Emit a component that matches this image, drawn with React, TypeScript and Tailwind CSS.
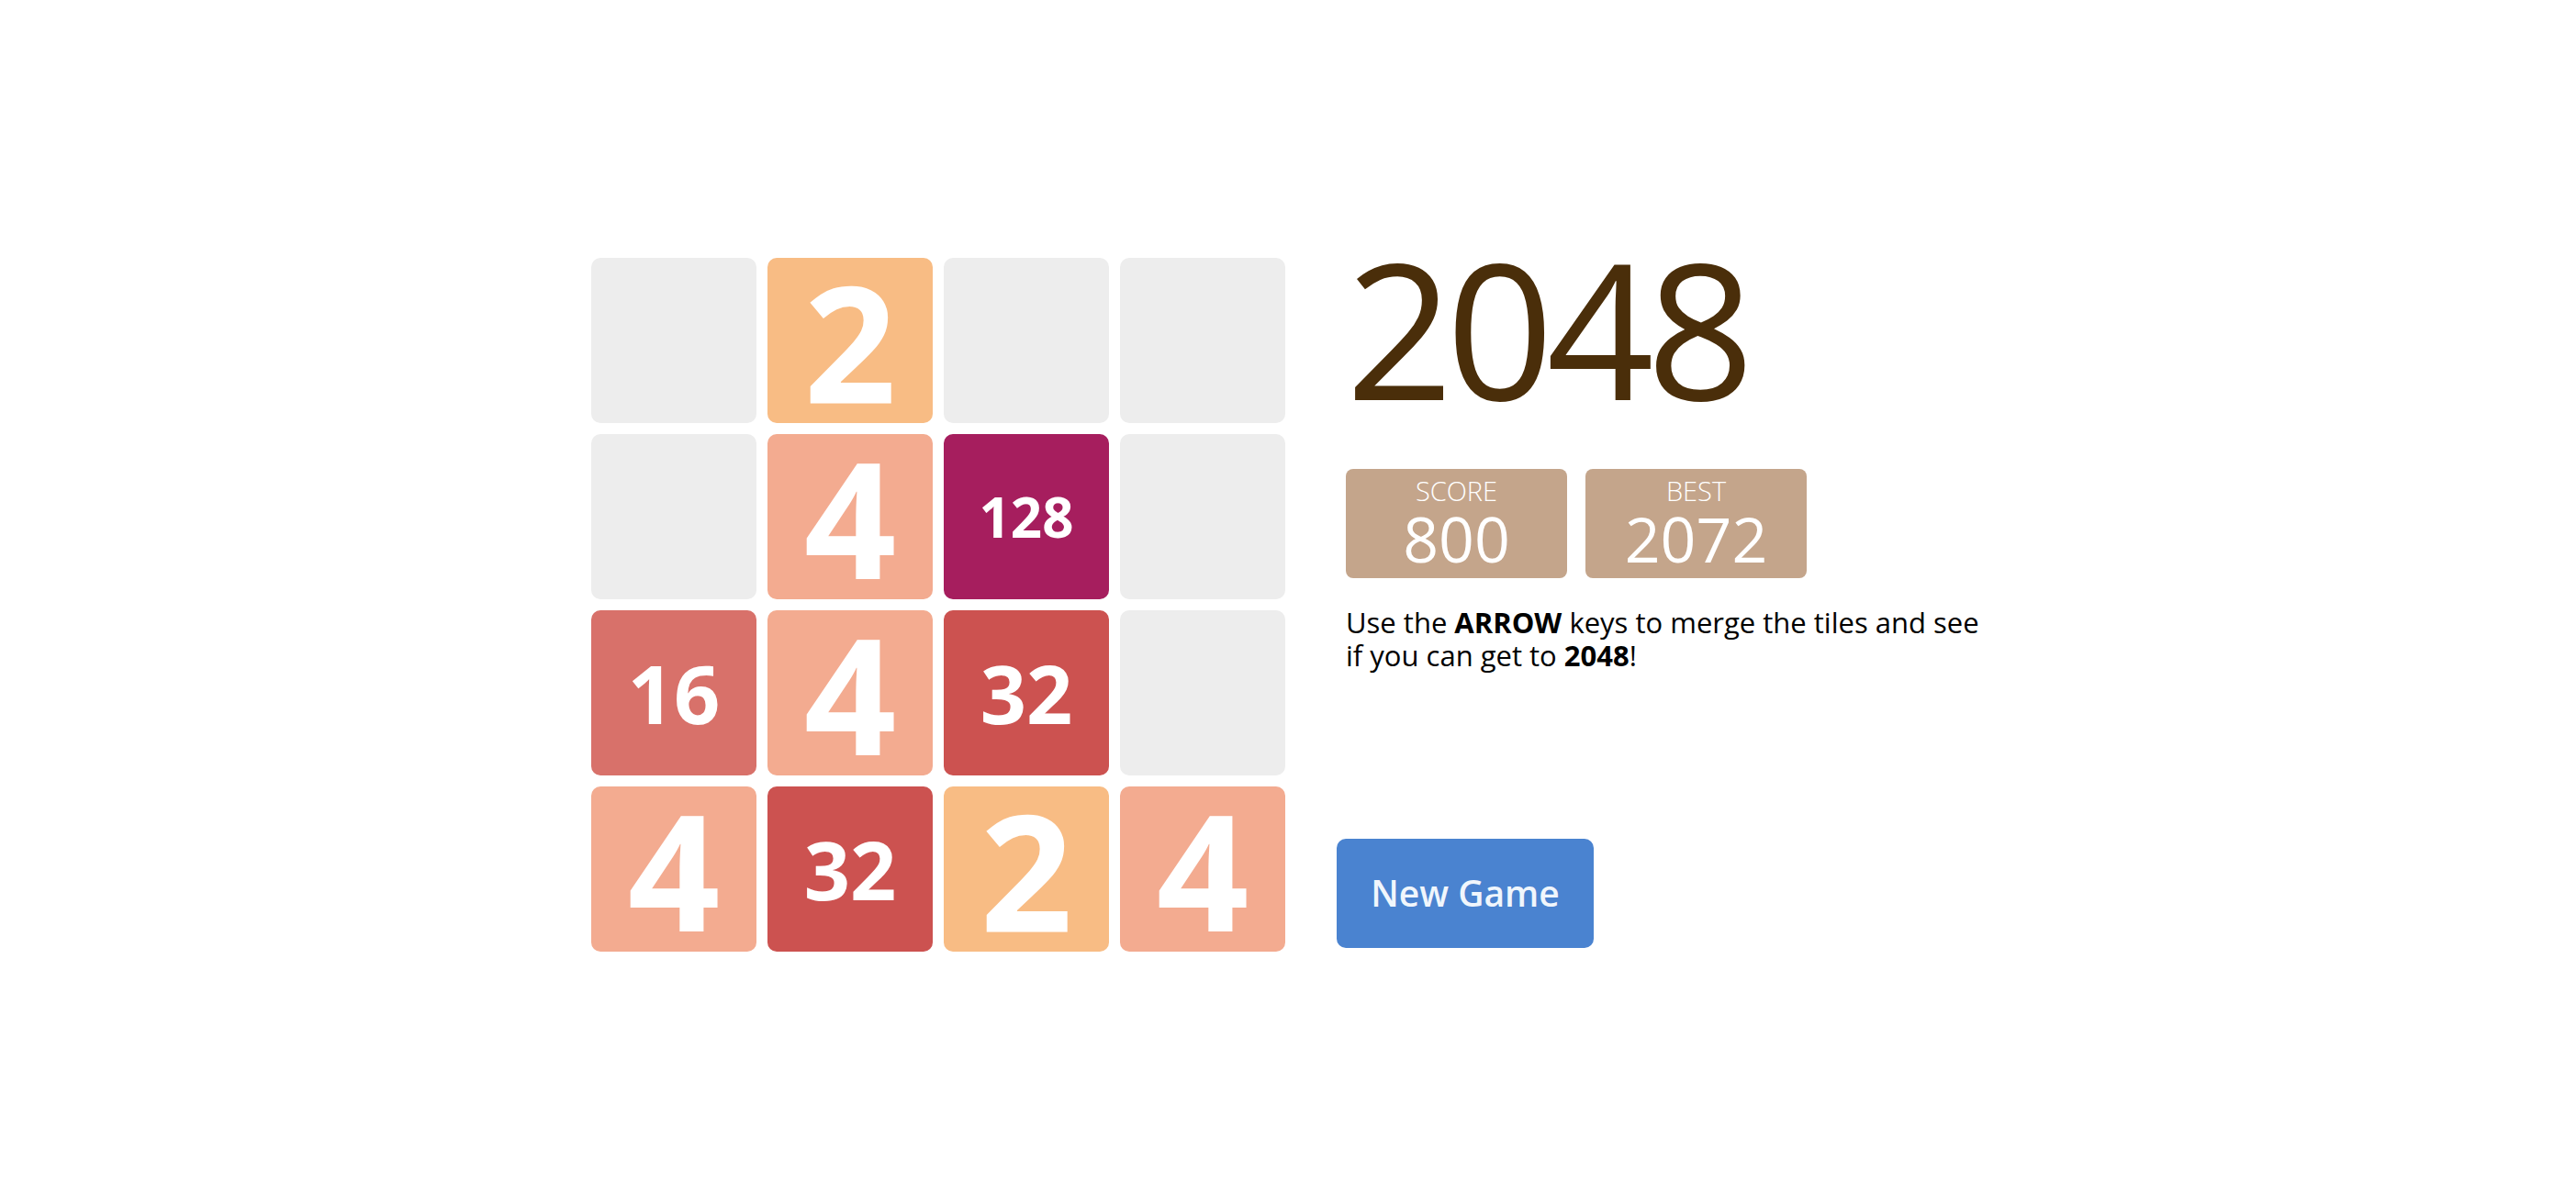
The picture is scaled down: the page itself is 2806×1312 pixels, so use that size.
import React from "react";

const board: number[][] = [
  [0, 2, 0, 0],
  [0, 4, 128, 0],
  [16, 4, 32, 0],
  [4, 32, 2, 4],
];

const tileBg: Record<number, string> = {
  0: "bg-[#ededed]",
  2: "bg-[#f8bc84]",
  4: "bg-[#f3ab90]",
  16: "bg-[#d8716a]",
  32: "bg-[#cc5250]",
  128: "bg-[#a61e5e]",
};

const textSize = (value: number) => {
  if (value >= 100) return "text-[60px]";
  if (value >= 10) return "text-[88px]";
  return "text-[176px]";
};

const Tile = ({ value }: { value: number }) => (
  <div
    className={`w-[180px] h-[180px] rounded-[10px] flex items-center justify-center ${tileBg[value]}`}
  >
    {value > 0 && (
      <span className={`font-bold text-white leading-none ${textSize(value)}`}>
        {value}
      </span>
    )}
  </div>
);

const ScoreBox = ({ label, value }: { label: string; value: number }) => (
  <div className="w-[241px] h-[119px] rounded-[8px] bg-[#c4a58b] flex flex-col items-center text-white">
    <span className="text-[29px] leading-[34px] font-light mt-[7px]">{label}</span>
    <span className="text-[68px] leading-[70px] font-normal">{value}</span>
  </div>
);

export default function App() {
  return (
    <div
      className="h-screen w-full flex items-center justify-center gap-[56px] pt-[6px] bg-white"
      style={{ fontFamily: '"Open Sans", "Noto Sans", sans-serif' }}
    >
      <div className="grid grid-cols-4 gap-[12px]">
        {board.flat().map((value, i) => (
          <Tile key={i} value={value} />
        ))}
      </div>

      <div className="w-[706px] h-[756px] flex flex-col">
        <div className="pl-[10px]">
          <h1 className="text-[205px] leading-[180px] font-normal text-[#4a2e0a] -mt-[14px] tracking-[-8px]">
            2048
          </h1>
          <div className="flex gap-[20px] mt-[64px]">
            <ScoreBox label="SCORE" value={800} />
            <ScoreBox label="BEST" value={2072} />
          </div>
          <p className="text-[31px] leading-[36px] text-black mt-[30px]">
            Use the <b>ARROW</b> keys to merge the tiles and see
            <br />
            if you can get to <b>2048</b>!
          </p>
        </div>
        <div className="mt-auto mb-[4px]">
          <button className="w-[280px] h-[119px] rounded-[10px] bg-[#4a83d0] text-[#f0f6fc] text-[39px] font-semibold">
            New Game
          </button>
        </div>
      </div>
    </div>
  );
}
